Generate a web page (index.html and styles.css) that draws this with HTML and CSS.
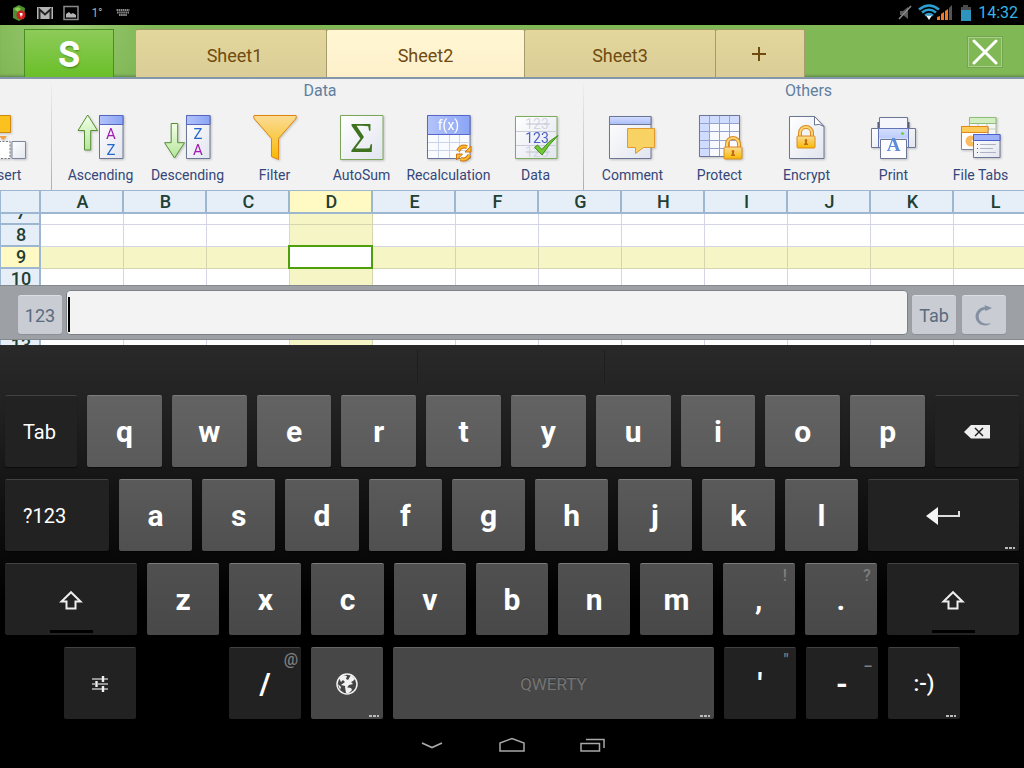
FILE: index.html
```html
<!DOCTYPE html>
<html lang="en">
<head>
<meta charset="utf-8">
<meta name="viewport" content="width=device-width, initial-scale=1">
<title>Sheet2</title>
<link rel="stylesheet" href="styles.css">
</head>
<body>
<svg width="0" height="0" class="defs" aria-hidden="true">
  <defs>
    <linearGradient id="paper" x1="0" y1="0" x2="1" y2="1"><stop offset="0" stop-color="#fff"/><stop offset="1" stop-color="#e2e5ef"/></linearGradient>
    <linearGradient id="blue" x1="0" y1="0" x2="1" y2="0"><stop offset="0" stop-color="#b3c3fa"/><stop offset="1" stop-color="#8ba5f5"/></linearGradient>
    <linearGradient id="pale" x1="0" y1="0" x2="0" y2="1"><stop offset="0" stop-color="#d4deff"/><stop offset="1" stop-color="#a9bdf8"/></linearGradient>
    <linearGradient id="green" x1="0" y1="0" x2="0" y2="1"><stop offset="0" stop-color="#f2ffe8"/><stop offset="1" stop-color="#b5e59a"/></linearGradient>
    <linearGradient id="gold" x1="0" y1="0" x2="0" y2="1"><stop offset="0" stop-color="#fbdc96"/><stop offset="1" stop-color="#f7b900"/></linearGradient>
    <symbol id="lock" viewBox="0 0 20 24">
      <path d="M4 12V8a6 6 0 0 1 12 0v4" fill="none" stroke="#d98a20" stroke-width="4"/>
      <path d="M4 12V8a6 6 0 0 1 12 0v4" fill="none" stroke="#fbd576" stroke-width="2"/>
      <rect x="1" y="11" width="18" height="12" rx="1" fill="url(#gold)" stroke="#d98a20"/>
      <path d="M10 14a1.500 1.500 0 0 1 1 2.500v2h1v1.500H8v-1.500h1v-2a1.500 1.500 0 0 1 1-2.500z" fill="#c46a14"/>
    </symbol>
    <symbol id="shift" viewBox="0 0 24 20">
      <path d="M12 2.200 2.500 11.500H7.500V18.500H16.500V11.500H21.500Z" fill="none" stroke="#eee" stroke-width="2"/>
    </symbol>
  </defs>
</svg>

<header class="status">
  <div class="status-side">
    <svg class="status-icon" width="18" height="18" viewBox="0 0 18 18"><path d="M3 4 9 1l6 3-1 10-5 3-6-3z" fill="#4f8f2f"/><path d="M4 5l4-2 3 2-3 3z" fill="#8dcf52"/><circle cx="11" cy="11" r="4.500" fill="#cf1f1f"/><path d="M9.500 9h3v2.500h-1.200V14l-1-2.500z" fill="#fff"/></svg>
    <svg class="status-icon" width="18" height="18" viewBox="0 0 18 18"><path d="M1 3h16v12H1z" fill="#b4b4b4"/><path d="M3.500 15V5.500L9 10.500l5.500-5V15" fill="none" stroke="#222" stroke-width="2"/></svg>
    <svg class="status-icon" width="18" height="18" viewBox="0 0 18 18"><path d="M2 2.500h14v13H2z" fill="none" stroke="#8a8a8a" stroke-width="1.500"/><path d="M4 13.500V10l3-2 2 2 2-1 3 2v2.500z" fill="#b4b4b4"/></svg>
    <span class="status-temp">1°</span>
    <svg class="status-icon" width="18" height="18" viewBox="0 0 18 18"><path d="M2.500 6h13M3 8.500h12M5 11h8" stroke="#8a8a8a" stroke-width="1.800" stroke-dasharray="1.600 .5"/></svg>
  </div>
  <div class="status-side status-right">
    <svg width="14" height="16" viewBox="0 0 14 16"><path d="M2 6h3l5-4v12L5 10H2z" fill="#5c5c5c"/><path d="M1 14 13 1" stroke="#8a8a8a" stroke-width="1.500"/></svg>
    <svg class="wifi" width="36" height="18" viewBox="0 0 36 18"><path d="M1 5.500Q11-2.500 21 5.500M4 8.500q7-5.500 14 0M7 11.500q4-3 8 0" fill="none" stroke="#2b9fd0" stroke-width="2.600"/><path d="M8 11.500h6l-3 4.500z" fill="#e8f6fc"/><path d="M19 16v-3l3-1v4zM23 16v-6l3-2v8zM27 16V7l3-2v11z" fill="#f47a1f"/><path d="M31 16V4l3-3v15z" fill="#555"/></svg>
    <svg width="12" height="18" viewBox="0 0 12 18"><path d="M3 1h5v2h3v4H1V3h2z" fill="#4b4b4b"/><path d="M1 6h10v11H1z" fill="#2e93bd"/></svg>
    <span class="clock">14:32</span>
  </div>
</header>

<nav class="tabbar">
  <button class="logo" aria-label="Menu">S</button>
  <div class="tabs">
    <button class="tab">Sheet1</button>
    <button class="tab tab-active">Sheet2</button>
    <button class="tab">Sheet3</button>
    <button class="tab tab-add" aria-label="Add sheet"><svg width="16" height="16" viewBox="0 0 16 16"><path d="M8 1v14M1 8h14" stroke="#704b10" stroke-width="2"/></svg></button>
  </div>
  <button class="close" aria-label="Close"><svg width="26" height="26" viewBox="0 0 26 26"><path d="M2 2 24 24M24 2 2 24" stroke="#fff" stroke-width="3" stroke-linecap="round"/></svg></button>
</nav>

<section class="ribbon">
  <div class="group group-cut">
    <div class="tools">
      <button class="tool"><svg class="icon" viewBox="0 0 48 48"><path d="M12.500 3.500h18v17h-18z" fill="#fbc21f" stroke="#d08a10"/><path d="M19 24h8l-4 4z" fill="#f0a040"/><path d="M12 29.500h18v17H12z" fill="#fff" stroke="#778" stroke-dasharray="2 1.500"/><path d="M32 29.500h13.500v17H32z" fill="url(#paper)" stroke="#7d869f"/></svg>Insert</button>
    </div>
  </div>
  <div class="group">
    <h2 class="group-title">Data</h2>
    <div class="tools">
      <button class="tool"><svg class="icon" viewBox="0 0 48 48"><path d="M10.700 3 20.500 18.500H13.700V38H7.500V18.500H1z" fill="url(#green)" stroke="#568f33"/><path d="M22.500 3.500h23.500v43H22.500z" fill="url(#paper)" stroke="#6c7795"/><path d="M22.500 3.500h23.500v9H22.500z" fill="url(#blue)" stroke="#5767bd"/><text x="34" y="27" class="g15 violet">A</text><text x="34" y="43" class="g15 azure">Z</text></svg>Ascending</button>
      <button class="tool"><svg class="icon" viewBox="0 0 48 48"><path d="M10.500 46 20.500 30.700H13.700V11.500H7.200V30.700H.6z" fill="url(#green)" stroke="#568f33"/><path d="M22.500 3.500h23.500v43H22.500z" fill="url(#paper)" stroke="#6c7795"/><path d="M22.500 3.500h23.500v9H22.500z" fill="url(#blue)" stroke="#5767bd"/><text x="34" y="27" class="g15 azure">Z</text><text x="34" y="43" class="g15 violet">A</text></svg>Descending</button>
      <button class="tool"><svg class="icon" viewBox="0 0 48 48"><path d="M3 3.500H45Q46 5 44.500 7L27.500 26.500V47.500L20.500 44.500V26.500L3.500 7Q2 5 3 3.500z" fill="url(#gold)" stroke="#e0860c"/></svg>Filter</button>
      <button class="tool"><svg class="icon" viewBox="0 0 48 48"><path d="M2.500 3.500H45V47.500H2.500z" fill="url(#paper)" stroke="#7ca75a"/><text x="24" y="40" class="sigma">Σ</text></svg>AutoSum</button>
      <button class="tool"><svg class="icon" viewBox="0 0 48 48"><path d="M2.500 3.500H45V46.500H2.500z" fill="#fafbff" stroke="#66749d"/><path d="M13.500 23v23M24.500 23v23M34.500 23v23M3 30.500h42M3 38.500h42" stroke="#c9d5ec"/><path d="M2.500 3.500H45V22.500H2.500z" fill="url(#blue)" stroke="#5767cd"/><text x="23.500" y="18" class="g14 white">f(x)</text><g fill="none" stroke="#cf7412" stroke-width="4"><path d="M33 39q3-6 9-4M44.500 43q-3 6-9 4"/></g><g fill="none" stroke="#fbb92c" stroke-width="2"><path d="M33 39q3-6 9-4M44.500 43q-3 6-9 4"/></g><path d="M46 34v6h-6zM31.500 48v-6h6z" fill="#fbb92c" stroke="#cf7412"/></svg>Recalculation</button>
      <button class="tool"><svg class="icon" viewBox="0 0 48 48"><path d="M3.500 4.500H45V46.500H3.500z" fill="url(#paper)" stroke="#7cac5b"/><path d="M4 19.500h41M4 33.500h41" stroke="#c9ccd8"/><text x="25" y="17" class="g14 faint">123</text><text x="25" y="31" class="g14 royal">123</text><text x="25" y="45" class="g14 faint">123</text><path d="M14 12h24M14 40h24" stroke="#c0c2cf"/><path d="M22.500 35.500 25.500 33 30 37.500Q36 29 46 23.500 36.500 33 30 43z" fill="#71c832" stroke="#3f8f1c"/></svg>Data</button>
    </div>
  </div>
  <div class="group">
    <h2 class="group-title">Others</h2>
    <div class="tools">
      <button class="tool"><svg class="icon" viewBox="0 0 48 48"><path d="M.5 4.500H42V46.500H.5z" fill="url(#paper)" stroke="#6c7795"/><path d="M.5 4.500H42V12.500H.5z" fill="url(#pale)" stroke="#6c7795"/><path d="M18.500 16.500H45.500V35.500H34.500L26.500 41.500V35.500H18.500z" fill="#f9d264" stroke="#e09a2e"/></svg>Comment</button>
      <button class="tool"><svg class="icon" viewBox="0 0 48 48"><path d="M3.500 3.500H43.500V44.500H3.500z" fill="#f8faff" stroke="#6c7795"/><path d="M4 4H43V11H13V44H4z" fill="#cfdcff"/><path d="M13.500 4v40M23.500 4v40M33.500 4v40M4 11.500h39M4 19.500h39M4 28.500h39M4 36.500h39" stroke="#93a4cc"/><path d="M3.500 3.500H43.500V44.500H3.500z" fill="none" stroke="#6c7795"/><use href="#lock" x="27" y="24" width="20" height="24"/></svg>Protect</button>
      <button class="tool"><svg class="icon" viewBox="0 0 48 48"><path d="M6.500 4.500H31.500L41 14.500V46.500H6.500z" fill="url(#paper)" stroke="#6c7795"/><path d="M31.500 4.500V13Q36 11 41 14.500z" fill="#fff" stroke="#6c7795"/><use href="#lock" x="13" y="13" width="20" height="24"/></svg>Encrypt</button>
      <button class="tool"><svg class="icon" viewBox="0 0 48 48"><path d="M8.500 10V17M38.500 10V17" stroke="#555f7c" stroke-width="2"/><path d="M9.500 5.500H37.500V17H9.500z" fill="#f5f6fb" stroke="#6c7795"/><path d="M1.500 16.500H45.500V35.500H1.500z" fill="url(#paper)" stroke="#6c7795"/><path d="M8.500 16.500H38.500V35H8.500z" fill="url(#pale)" stroke="#6274b5"/><path d="M9 26.500h29V35H9z" fill="#e8edff"/><circle cx="32.500" cy="21.500" r="1.600" fill="#6fd34a"/><path d="M10.500 27.500H36.500V46.500H10.500z" fill="#fdfdff" stroke="#6c7795"/><text x="23.500" y="39" class="print-a">A</text></svg>Print</button>
      <button class="tool"><svg class="icon" viewBox="0 0 48 48"><path d="M12.500 5.500H39V24H12.500z" fill="#f5f5f5" stroke="#a9b9a0"/><path d="M12.500 5.500H39V11.500H12.500z" fill="#d3eec3" stroke="#8fbd7a"/><path d="M21 12v10M30 12v10M13 17h26" stroke="#c5cdc0"/><path d="M4.500 14.500H31V37.500H4.500z" fill="#fff" stroke="#7d86a0"/><path d="M4.500 14.500H31V20.500H4.500z" fill="#fccb5b" stroke="#e08a1a"/><circle cx="14" cy="29" r="5.500" fill="#fbbb62"/><path d="M14 29l5-3v6z" fill="#fff"/><path d="M16.500 22.500H43V45.500H16.500z" fill="url(#paper)" stroke="#6c7795"/><path d="M16.500 22.500H43V28.500H16.500z" fill="#9db2fa" stroke="#4c62c9"/><path d="M23 32.500h16M23 36.500h13M23 40.500h16" stroke="#adb3c4"/><path d="M20 32.500h1M20 36.500h1M20 40.500h1" stroke="#555"/></svg>File Tabs</button>
    </div>
  </div>
</section>

<main class="sheet">
  <table class="grid grid-head">
    <colgroup><col class="col-num"><col span="12" class="col-data"></colgroup>
    <tr><th></th><th>A</th><th>B</th><th>C</th><th class="picked">D</th><th>E</th><th>F</th><th>G</th><th>H</th><th>I</th><th>J</th><th>K</th><th>L</th></tr>
  </table>
  <div class="grid-window">
    <table class="grid grid-body">
      <colgroup><col class="col-num"><col span="12" class="col-data"></colgroup>
      <tr><th>7</th><td></td><td></td><td></td><td></td><td></td><td></td><td></td><td></td><td></td><td></td><td></td><td></td></tr>
      <tr><th>8</th><td></td><td></td><td></td><td></td><td></td><td></td><td></td><td></td><td></td><td></td><td></td><td></td></tr>
      <tr class="row-picked"><th class="picked">9</th><td></td><td></td><td></td><td class="cell-picked"></td><td></td><td></td><td></td><td></td><td></td><td></td><td></td><td></td></tr>
      <tr><th>10</th><td></td><td></td><td></td><td></td><td></td><td></td><td></td><td></td><td></td><td></td><td></td><td></td></tr>
      <tr><th>11</th><td></td><td></td><td></td><td></td><td></td><td></td><td></td><td></td><td></td><td></td><td></td><td></td></tr>
      <tr><th>12</th><td></td><td></td><td></td><td></td><td></td><td></td><td></td><td></td><td></td><td></td><td></td><td></td></tr>
      <tr><th>13</th><td></td><td></td><td></td><td></td><td></td><td></td><td></td><td></td><td></td><td></td><td></td><td></td></tr>
    </table>
  </div>
  <div class="entry">
    <button class="entry-key">123</button>
    <div class="entry-field"><input class="entry-input" type="text" aria-label="Cell value"><span class="caret"></span></div>
    <button class="entry-key">Tab</button>
    <button class="entry-key entry-enter" aria-label="Redo"><svg width="20" height="24" viewBox="0 0 20 24"><path d="M11 4C-1 5-2 21 10.500 22.500q4 .3 6.500-2.500-4.500 1.500-8 0C2.500 17 3.500 8 11 6.500l.5 1.500L18 5 10.500 2z" fill="#8391a3"/></svg></button>
  </div>
</main>

<section class="keyboard">
  <div class="suggest"><span></span><span></span><span></span></div>
  <div class="keys">
    <div class="row">
      <button class="key dark word w72">Tab</button>
      <button class="key fill">q</button><button class="key fill">w</button><button class="key fill">e</button><button class="key fill">r</button><button class="key fill">t</button><button class="key fill">y</button><button class="key fill">u</button><button class="key fill">i</button><button class="key fill">o</button><button class="key fill">p</button>
      <button class="key dark w84" aria-label="Delete"><svg width="28" height="16" viewBox="0 0 28 16"><path d="M8 1H27V14.500H8L1 8z" fill="#eee"/><path d="M12 4l8 8M20 4l-8 8" stroke="#222" stroke-width="1.500"/></svg></button>
    </div>
    <div class="row">
      <button class="key dark word w104">?123</button>
      <button class="key fill t2">a</button><button class="key fill t2">s</button><button class="key fill t2">d</button><button class="key fill t2">f</button><button class="key fill t2">g</button><button class="key fill t2">h</button><button class="key fill t2">j</button><button class="key fill t2">k</button><button class="key fill t2">l</button>
      <button class="key dark w151" aria-label="Enter"><svg width="36" height="20" viewBox="0 0 36 20"><path d="M1 10 13 1V19z" fill="#f4f4f4"/><path d="M12 10H34V5" fill="none" stroke="#ddd" stroke-width="2"/></svg><i class="more"></i></button>
    </div>
    <div class="row">
      <button class="key dark w132" aria-label="Shift"><svg width="24" height="20"><use href="#shift"/></svg><i class="lockbar"></i></button>
      <button class="key fill t3">z</button><button class="key fill t3">x</button><button class="key fill t3">c</button><button class="key fill t3">v</button><button class="key fill t3">b</button><button class="key fill t3">n</button><button class="key fill t3">m</button><button class="key fill t3">,<span class="hint">!</span></button><button class="key fill t3">.<span class="hint">?</span></button>
      <button class="key dark w132" aria-label="Shift"><svg width="24" height="20"><use href="#shift"/></svg><i class="lockbar"></i></button>
    </div>
    <div class="row row-last">
      <button class="key dark w72 settings" aria-label="Settings"><svg width="18" height="18" viewBox="0 0 18 18"><path d="M1 4h10M13 4h4M1 9h3M7 9h10M1 14h10M13 14h4" stroke="#bbb" stroke-width="1.600"/><path d="M12 1v6M5.500 6v6M12 11v6" stroke="#f0f0f0" stroke-width="2.400"/></svg></button>
      <button class="key dark w72">/<span class="hint">@</span></button>
      <button class="key t4 w72" aria-label="Language"><svg width="24" height="24" viewBox="0 0 24 24"><circle cx="12" cy="12" r="10" fill="#444" stroke="#f2f2f2" stroke-width="1.500"/><path d="M4 6l4-3 4 1-1 3 2 1 3-5 4 4-2 2-2 1 2 2-4 1-3 4-1-3-4-1 4-3-2-2-2 2zM10 15l6 1 1 2-3 3h-3zM3 12l3 3-1 3z" fill="#f2f2f2"/></svg><i class="more"></i></button>
      <button class="key t4 fill space">QWERTY<i class="more"></i></button>
      <button class="key dark w72">'<span class="hint">"</span></button>
      <button class="key dark w72">-<span class="hint">_</span></button>
      <button class="key dark w72 smiley">:-)<i class="more"></i></button>
    </div>
  </div>
</section>

<footer class="navbar">
  <button class="nav" aria-label="Hide keyboard"><svg width="28" height="16" viewBox="0 0 28 16"><path d="M4 6 14 10.500 24 6" fill="none" stroke="#a8a8a8" stroke-width="1.800"/></svg></button>
  <button class="nav" aria-label="Home"><svg width="28" height="16" viewBox="0 0 28 16"><path d="M2 14V6L14 1.500 26 6V14z" fill="none" stroke="#a8a8a8" stroke-width="1.500"/></svg></button>
  <button class="nav" aria-label="Recent apps"><svg width="28" height="16" viewBox="0 0 28 16"><path d="M3 6.500H21.500V14H3z" fill="none" stroke="#a8a8a8" stroke-width="1.500"/><path d="M8 2.500H26V11" fill="none" stroke="#a8a8a8" stroke-width="1.500"/></svg></button>
</footer>
</body>
</html>
```

FILE: styles.css
```css
* { box-sizing: border-box; }
body {
  margin: 0;
  min-height: 100vh;
  display: flex;
  flex-direction: column;
  overflow-x: hidden;
  background: #000;
  font-family: Roboto, "Liberation Sans", sans-serif;
}
button {
  margin: 0;
  padding: 0;
  border: 0;
  background: none;
  font: inherit;
  color: inherit;
}
svg { display: block; }
.defs { position: absolute; }

.status {
  height: 25px;
  padding: 0 6px 0 10px;
  display: flex;
  justify-content: space-between;
}
.status-side { display: flex; align-items: center; gap: 8px; }
.status-right { gap: 6px; }
.status-temp { width: 18px; text-align: center; font-size: 12px; color: #aaa; }
.clock { font-size: 16px; color: #33b5e5; }

.tabbar {
  height: 54px;
  padding: 4px 22px 0 24px;
  display: flex;
  background: radial-gradient(circle at 68px 0, #9dcb78 0, #81b856 80px);
  border-bottom: 2px solid #8497a8;
  box-shadow: inset 0 -3px 3px -2px #5b7f48;
}
.logo {
  width: 90px;
  border: 1px solid #4a8e22;
  border-bottom: 0;
  background: linear-gradient(#8ecb5a, #6abf28);
  color: #fff;
  font-size: 34px;
  line-height: 44px;
  -webkit-text-stroke: 2px #fff;
  text-shadow: 1px 2px 2px #3c7a18;
}
.tabs {
  flex: 1;
  margin-left: 22px;
  display: flex;
}
.tab {
  width: 191px;
  border: 1px solid #a49b6e;
  border-width: 1px 1px 0 0;
  border-radius: 2px 2px 0 0;
  background: linear-gradient(#e3d79c, #dacd97);
  color: #704b10;
  font-size: 18px;
  padding-top: 3px;
}
.tab:first-child { padding-left: 7px; }
.tab-active { width: 198px; background: linear-gradient(#fff7d2, #fdf0cb); }
.tab-add { width: 89px; padding-top: 0; padding-right: 3px; display: flex; align-items: center; justify-content: center; }
.close {
  width: 34px;
  height: 30px;
  margin-top: 8px;
  border: 1px solid #a9cd8a;
  outline: 1px solid #74a54e;
  display: flex;
  align-items: center;
  justify-content: center;
}

.ribbon {
  height: 111px;
  display: flex;
  overflow: hidden;
  background: #f2f2f2;
  color: #34477a;
}
.group {
  flex: none;
  padding: 0 4px 0 5px;
  border-left: 1px solid;
  border-image: linear-gradient(#f2f2f2, #a9b0b0) 1;
  display: flex;
  flex-direction: column;
}
.group-cut {
  width: 51px;
  border: 0;
  align-items: flex-end;
  overflow: hidden;
}
.group-cut .tools { margin-top: 24px; }
.group-title {
  margin: 0;
  height: 24px;
  padding-left: 4px;
  line-height: 24px;
  font-size: 16px;
  font-weight: 400;
  text-align: center;
  color: #5f7fa0;
}
.tools { display: flex; padding-top: 9px; }
.tool {
  flex: none;
  width: 87px;
  display: flex;
  flex-direction: column;
  align-items: center;
  gap: 7px;
  font-size: 14px;
  line-height: 16px;
  white-space: nowrap;
}
.icon { width: 48px; height: 48px; overflow: visible; filter: drop-shadow(1px 1px 1px #0003); }
.icon text { text-anchor: middle; }
.g15 { font-size: 15px; }
.g14 { font-size: 14px; }
.violet { fill: #a31ab5; }
.azure { fill: #2467c9; }
.white { fill: #fff; }
.faint { fill: #d3d5df; }
.royal { fill: #4a62c4; }
.sigma { font: 42px "Liberation Serif", serif; fill: #3e7420; }
.print-a { font: bold 19px "Liberation Serif", serif; fill: #5b8ddb; }

.sheet { position: relative; height: 155px; overflow: hidden; background: #fff; }
.grid {
  width: 1037px;
  table-layout: fixed;
  border-collapse: separate;
  border-spacing: 0;
  font-size: 18px;
  line-height: 20px;
}
.col-num { width: 41px; }
.col-data { width: 83px; }
.grid th, .grid td { padding: 0; height: 22px; }
.grid th {
  padding-left: 2px;
  background: #e6eff7;
  color: #1f4035;
  font-weight: 500;
  border-right: 2px solid #9db7d0;
  border-bottom: 2px solid #9db7d0;
}
.grid-head th { height: 24px; border-top: 1px solid #9db7d0; }
.grid th:first-child { border-left: 1px solid #9db7d0; }
.grid th.picked { background: #fffac3; }
.grid td { border-right: 1px solid #d3d4e4; border-bottom: 1px solid #d3d4e4; }
.grid td:nth-child(5), .grid .row-picked td {
  background: #f6f5c6;
  border-color: #d5d5b0;
}
.grid .row-picked .cell-picked {
  position: relative;
  background: #fff;
  border-color: #4d9f0c;
  box-shadow: inset -1px -1px 0 #4d9f0c, -1px -1px 0 1px #4d9f0c;
}
.grid-window { overflow: hidden; height: 131px; }
.grid-body { margin-top: -11px; }

.entry {
  position: absolute;
  inset: auto 0 5px;
  height: 55px;
  padding: 4px 18px;
  display: flex;
  gap: 4px;
  background: #9da0a5;
  border-top: 1px solid #85888d;
  border-bottom: 1px solid #85888d;
}
.entry-key {
  flex: none;
  width: 44px;
  height: 39px;
  margin-top: 5px;
  border-radius: 3px;
  background: #c9ccd2;
  border-top: 1px solid #dcdee2;
  box-shadow: 0 1px 1px #8b8e94;
  color: #5a6b80;
  font-size: 18px;
}
.entry-enter { margin-left: 2px; display: flex; align-items: center; justify-content: center; }
.entry-field { flex: 1; position: relative; }
.entry-input {
  display: block;
  width: 100%;
  height: 45px;
  padding: 0 4px;
  border: 1px solid #7d8187;
  border-radius: 4px;
  background: #f3f3f3;
  font: 18px Roboto, sans-serif;
}
.caret { position: absolute; left: 2px; top: 7px; width: 2px; height: 35px; background: #000; }

.keyboard { flex: 1; background: linear-gradient(#292929, #222 60px, #000 260px); }
.suggest { height: 40px; padding: 5px 0 0; display: flex; }
.suggest span { flex: 418; border-right: 1px solid #1e1e1e; }
.suggest span + span { flex: 186; }
.suggest span:last-child { flex: 420; border: 0; }
.keys { padding: 10px 5px 1px; display: flex; flex-direction: column; gap: 12px; }
.row { height: 72px; display: flex; gap: 10px; }
.row-last { padding: 0 59px; }
.key {
  position: relative;
  flex: none;
  display: flex;
  align-items: center;
  justify-content: center;
  border-top: 1px solid #7c7c7c;
  border-radius: 2px;
  background: linear-gradient(#636363, #5a5a5a);
  box-shadow: 0 1px 1px #0008;
  color: #fff;
  font-size: 30px;
  font-weight: 700;
}
.fill { flex: 1; }
.t2 { background: linear-gradient(#5a5a5a, #505050); }
.t3 { background: linear-gradient(#505050, #484848); }
.t4 { background: #474747; border-color: #666; }
.dark { background: #222; border-color: #424242; }
.w72 { width: 72px; }
.w84 { width: 84px; }
.w104 { width: 104px; }
.w132 { width: 132px; }
.w151 { width: 151px; }
.word { justify-content: flex-start; padding-left: 18px; font-size: 20px; font-weight: 400; }
.settings { margin-right: 83px; }
.space { font-size: 17px; font-weight: 400; color: #757575; text-shadow: 0 -1px 0 #333; }
.smiley { font-size: 22px; font-weight: 500; }
.hint {
  position: absolute;
  top: 2px;
  right: 0;
  width: 20px;
  text-align: center;
  font-size: 16px;
  line-height: 20px;
  font-weight: 500;
  color: #7e7e7e;
}
.more {
  position: absolute;
  right: 4px;
  bottom: 2px;
  width: 10px;
  height: 2px;
  background: repeating-linear-gradient(90deg, #bbb 0 3px, transparent 3px 4px);
}
.lockbar {
  position: absolute;
  left: 50%;
  bottom: 2px;
  width: 43px;
  height: 3px;
  margin-left: -21px;
  background: #000;
}

.navbar { height: 48px; padding-top: 2px; display: flex; justify-content: center; gap: 52px; }
.nav { display: flex; align-items: center; }
```
